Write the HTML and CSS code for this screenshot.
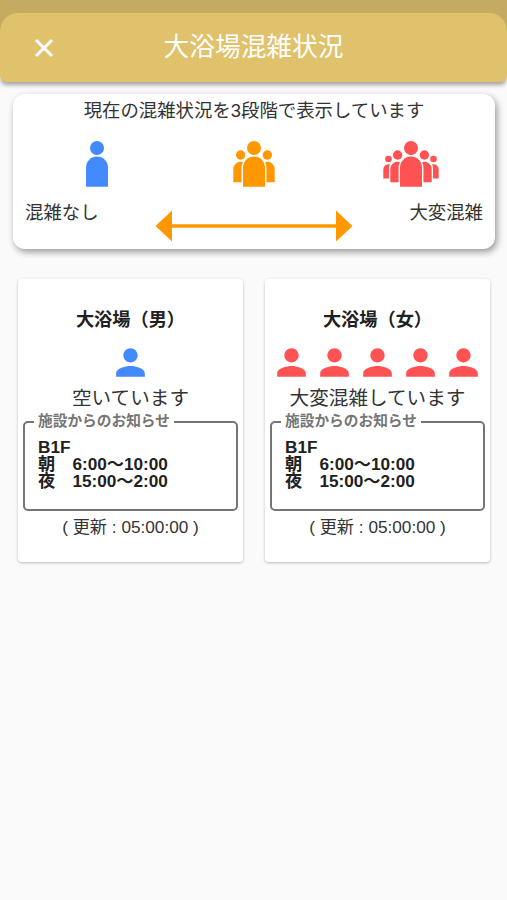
FILE: index.html
```html
<!DOCTYPE html>
<html lang="ja">
<head>
  <meta charset="UTF-8">
  <meta name="viewport" content="width=device-width, initial-scale=1">
  <title>大浴場混雑状況</title>
  <link rel="stylesheet" href="styles.css">
</head>
<body>
  <svg class="defs" width="0" height="0">
    <symbol id="person" viewBox="0 0 24 24">
      <path d="M12 12c2.21 0 4-1.79 4-4s-1.79-4-4-4-4 1.79-4 4 1.79 4 4 4zm0 2c-2.67 0-8 1.34-8 4v2h16v-2c0-2.66-5.33-4-8-4z"/>
    </symbol>
    <symbol id="standing" viewBox="0 0 60 48">
      <circle cx="30" cy="8" r="7"/>
      <path d="M19 46.7V27.5a11 11 0 0 1 22 0v19.200z"/>
    </symbol>
    <symbol id="pair" viewBox="0 0 60 48">
      <circle cx="16.6" cy="15" r="4.7"/>
      <circle cx="43.4" cy="15" r="4.7"/>
      <path d="M9.3 42.2V29.2a7.5 7.5 0 0 1 9.6-7.2a13 13 0 0 0-1.3 5.5v14.7z"/>
      <path d="M50.7 42.2V29.2a7.5 7.5 0 0 0-9.6-7.2a13 13 0 0 1 1.3 5.5v14.7z"/>
    </symbol>
    <symbol id="outer" viewBox="0 0 60 48">
      <circle cx="7.5" cy="19" r="3.3"/>
      <circle cx="52.5" cy="19" r="3.3"/>
      <path d="M2.3 38.4V29.5a5.4 5.4 0 0 1 6.6-5.2a9 9 0 0 0-.9 4v10.1z"/>
      <path d="M57.7 38.4V29.5a5.4 5.4 0 0 0-6.6-5.2a9 9 0 0 1 .9 4v10.1z"/>
    </symbol>
  </svg>

  <div class="backdrop">
    <header class="header">
      <button class="close" aria-label="閉じる">
        <svg width="20" height="20" viewBox="0 0 20 20"><path d="M2 2L18 18M18 2L2 18"/></svg>
      </button>
      <h1>大浴場混雑状況</h1>
    </header>
  </div>

  <section class="guide">
    <p class="guide-text">現在の混雑状況を3段階で表示しています</p>
    <div class="levels">
      <svg class="level blue" viewBox="0 0 60 48"><use href="#standing"/></svg>
      <svg class="level orange" viewBox="0 0 60 48"><use href="#standing"/><use href="#pair"/></svg>
      <svg class="level red" viewBox="0 0 60 48"><use href="#standing"/><use href="#pair"/><use href="#outer"/></svg>
    </div>
    <div class="scale">
      <span>混雑なし</span>
      <svg class="arrow orange" viewBox="0 0 198 32">
        <path d="M.5 16L17 .5v13.7h164V.5L197.5 16L181 31.500v-13.700H17v13.700z"/>
      </svg>
      <span>大変混雑</span>
    </div>
  </section>

  <main class="cards">
    <article class="card">
      <h2>大浴場（男）</h2>
      <div class="people blue">
        <svg><use href="#person"/></svg>
      </div>
      <p class="status">空いています</p>
      <fieldset class="notice">
        <legend>施設からのお知らせ</legend>
        B1F<br>
        朝　6:00～10:00<br>
        夜　15:00～2:00
      </fieldset>
      <p class="updated">( 更新 : 05:00:00 )</p>
    </article>

    <article class="card">
      <h2>大浴場（女）</h2>
      <div class="people red">
        <svg><use href="#person"/></svg>
        <svg><use href="#person"/></svg>
        <svg><use href="#person"/></svg>
        <svg><use href="#person"/></svg>
        <svg><use href="#person"/></svg>
      </div>
      <p class="status">大変混雑しています</p>
      <fieldset class="notice">
        <legend>施設からのお知らせ</legend>
        B1F<br>
        朝　6:00～10:00<br>
        夜　15:00～2:00
      </fieldset>
      <p class="updated">( 更新 : 05:00:00 )</p>
    </article>
  </main>
</body>
</html>
```
FILE: styles.css
```css
:root {
  --gold: #dfc26b;
  --gold-dark: #c5ab62;
  --blue: #448aff;
  --orange: #ff9800;
  --red: #ff5252;
}

* {
  box-sizing: border-box;
}

body {
  margin: 0;
  min-height: 100vh;
  background: #fafafa;
  color: #333;
  font-family: "Liberation Sans", "Noto Sans CJK JP", sans-serif;
}

h1,
h2,
p {
  margin: 0;
  white-space: nowrap;
}

.defs {
  display: block;
}

.blue {
  fill: var(--blue);
}

.orange {
  fill: var(--orange);
}

.red {
  fill: var(--red);
}

.backdrop {
  padding-top: 13px;
  background: linear-gradient(var(--gold-dark) 40px, transparent 40px);
}

.header {
  display: grid;
  grid-template-columns: 60px 1fr 60px;
  align-items: center;
  height: 69px;
  padding: 0 14px;
  background: var(--gold);
  border-radius: 18px 18px 6px 6px;
  box-shadow: 0 4px 4px -1px rgba(0, 0, 0, 0.35);
}

.close {
  display: flex;
  justify-content: center;
  padding: 0;
  border: none;
  background: none;
  cursor: pointer;
}

.close path {
  stroke: white;
  stroke-width: 3;
}

.header h1 {
  color: white;
  font-size: 25.7px;
  font-weight: 400;
  line-height: 34px;
  padding-bottom: 2px;
  text-align: center;
}

.guide {
  height: 155px;
  margin: 12px 12px 0 13px;
  background: white;
  border-radius: 12px;
  box-shadow: 2px 3px 7px rgba(0, 0, 0, 0.4);
  font-size: 18.4px;
}

.guide-text {
  padding-top: 3px;
  line-height: 27px;
  text-align: center;
}

.levels {
  display: grid;
  grid-template-columns: repeat(3, 1fr);
  justify-items: center;
  margin-top: 16px;
  padding: 0 6px;
}

.level {
  width: 60px;
  height: 48px;
}

.scale {
  display: flex;
  justify-content: space-between;
  align-items: flex-start;
  padding: 11px 12px 0;
  line-height: 28px;
}

.arrow {
  width: 198px;
  height: 32px;
  margin-top: 11px;
}

.cards {
  display: grid;
  grid-template-columns: 1fr 1fr;
  gap: 22px;
  margin: 30px 17px 0 18px;
}

.card {
  height: 283px;
  padding: 26px 5px 0;
  background: white;
  border-radius: 4px;
  box-shadow: 0 1px 3px rgba(0, 0, 0, 0.25);
  text-align: center;
}

.card h2 {
  color: #212121;
  font-size: 18.2px;
  line-height: 30px;
}

.people {
  display: flex;
  justify-content: center;
  margin-top: 6px;
}

.people svg {
  width: 43px;
  height: 43px;
}

.status {
  font-size: 19.6px;
  line-height: 28px;
}

.notice {
  height: 98px;
  min-width: 0;
  margin: 1px 0 0;
  padding: 9px 13px 0;
  border: 2px solid #757575;
  border-radius: 5px;
  color: #212121;
  font-size: 17.2px;
  font-weight: bold;
  line-height: 17px;
  text-align: left;
  white-space: nowrap;
}

.notice legend {
  margin-left: -4px;
  padding: 0 4px;
  color: #757575;
  font-size: 14.7px;
}

.updated {
  margin-top: 4px;
  font-size: 17.2px;
  line-height: 24px;
}
```
